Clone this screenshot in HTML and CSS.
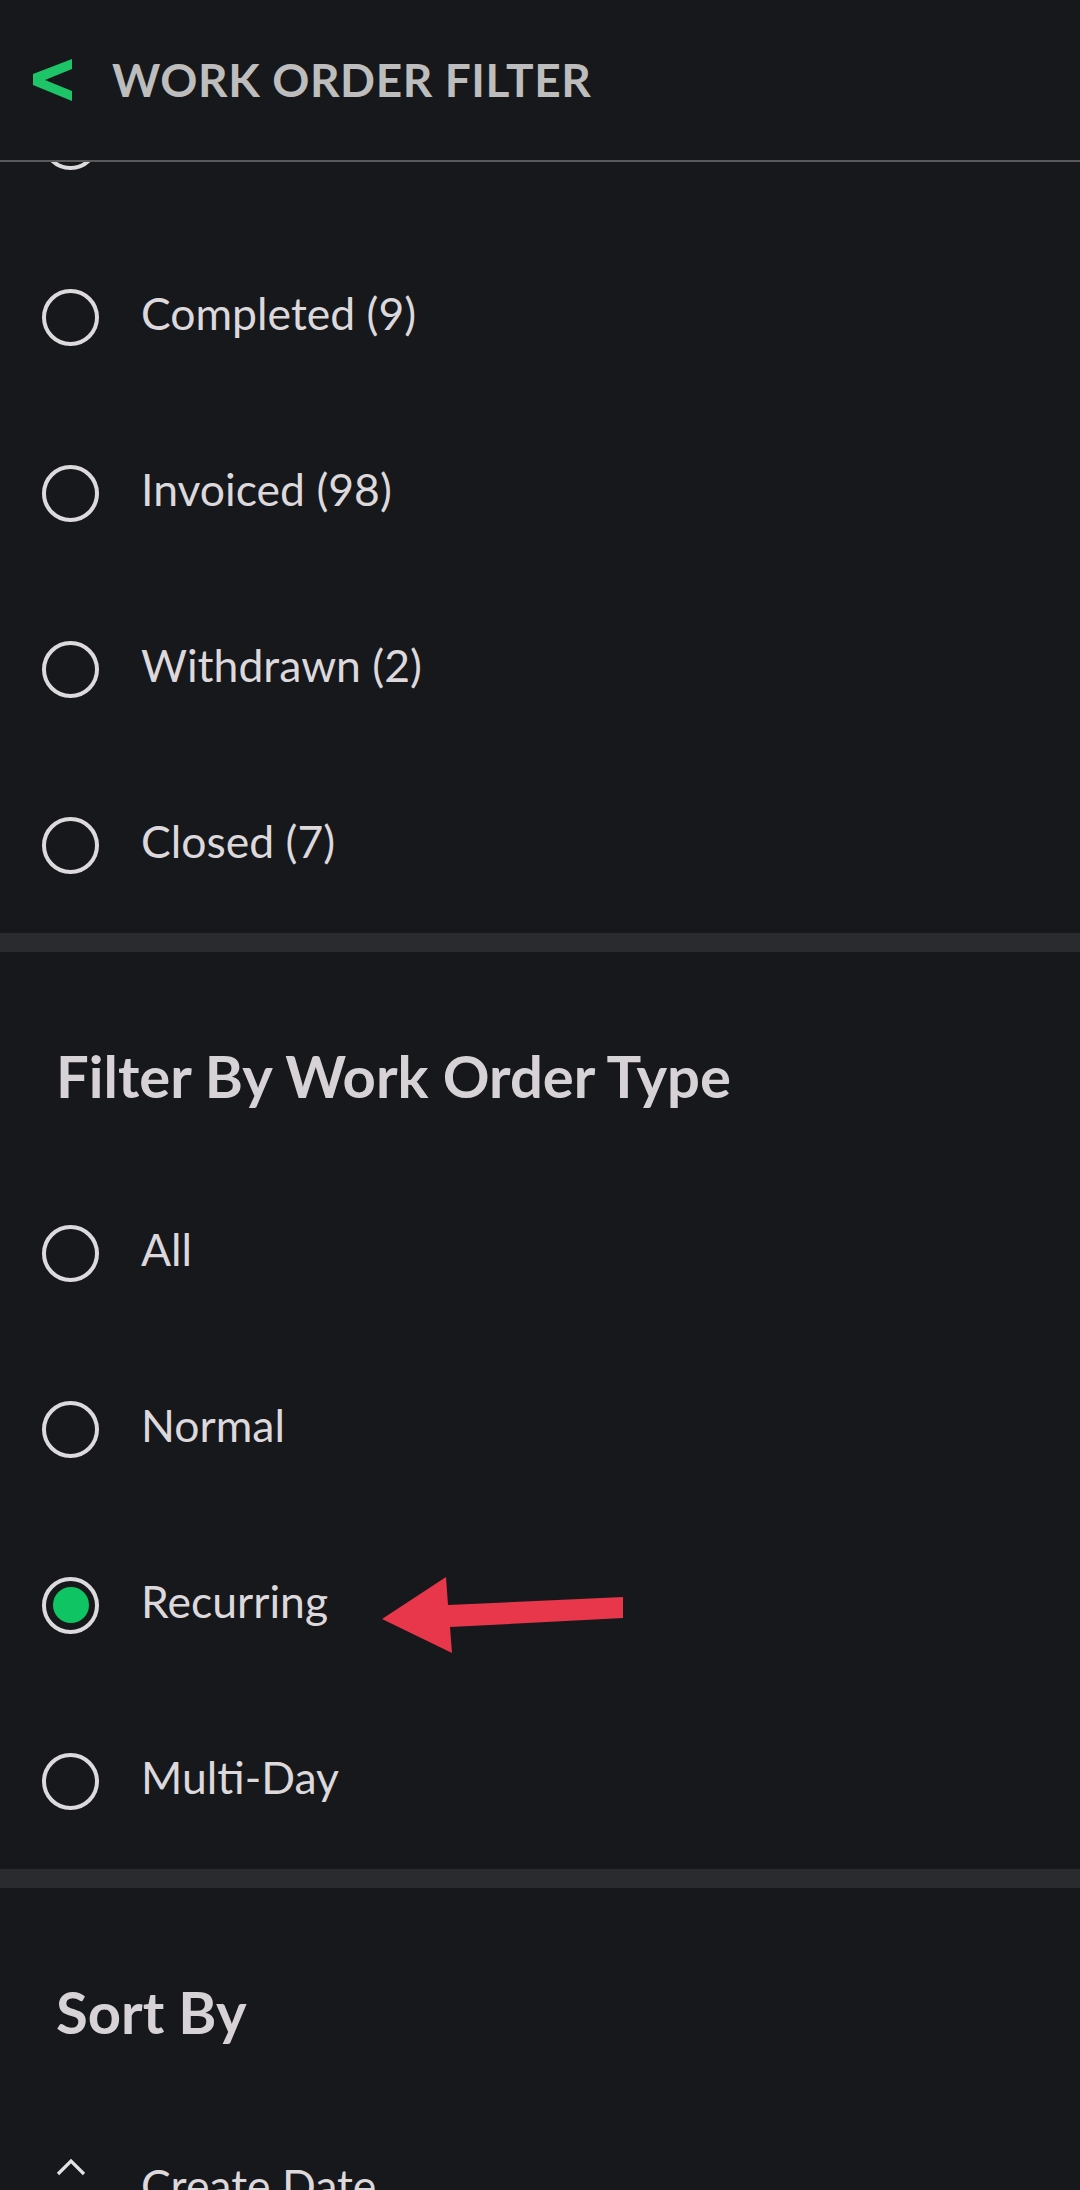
FILE: index.html
```html
<!DOCTYPE html>
<html lang="en">
<head>
<meta charset="utf-8">
<title>Work Order Filter</title>
<link rel="stylesheet" href="styles.css">
</head>
<body>
<div class="screen">
  <header class="topbar">
    <svg class="back" width="39" height="42" viewBox="33 58 39 42" aria-hidden="true">
      <polygon points="72,58 72,68 45,79 72,90 72,100 33,84 33,73" fill="#1ec468"/>
    </svg>
    <h1 class="title">WORK ORDER FILTER</h1>
  </header>

  <div class="viewport">
    <div class="scroller">
      <section class="group">
        <div class="row"><span class="radio"></span><span class="label"></span></div>
        <div class="row"><span class="radio"></span><span class="label">Completed (9)</span></div>
        <div class="row"><span class="radio"></span><span class="label">Invoiced (98)</span></div>
        <div class="row"><span class="radio"></span><span class="label">Withdrawn (2)</span></div>
        <div class="row"><span class="radio"></span><span class="label">Closed (7)</span></div>
      </section>

      <div class="divider"></div>

      <section class="group">
        <h2 class="heading">Filter By Work Order Type</h2>
        <div class="row"><span class="radio"></span><span class="label">All</span></div>
        <div class="row"><span class="radio"></span><span class="label">Normal</span></div>
        <div class="row"><span class="radio checked"><span class="dot"></span></span><span class="label">Recurring</span></div>
        <div class="row"><span class="radio"></span><span class="label">Multi-Day</span></div>
      </section>

      <div class="divider"></div>

      <section class="group">
        <h2 class="heading">Sort By</h2>
        <div class="row">
          <span class="caret">
            <svg width="30" height="18" viewBox="0 0 30 18" aria-hidden="true">
              <polyline points="2,16 15,3 28,16" fill="none" stroke="#e2e2e2" stroke-width="3.2"/>
            </svg>
          </span>
          <span class="label">Create Date</span>
        </div>
      </section>
    </div>
  </div>

  <svg class="annotation" width="260" height="90" viewBox="370 1570 260 90" aria-hidden="true">
    <polygon points="382,1619 446,1577 448,1605 623,1597 623,1618 450,1627 452,1653" fill="#e8374a"/>
  </svg>
</div>
</body>
</html>
```

FILE: styles.css
```css
html, body {
  margin: 0;
  padding: 0;
  background: #17181b;
}

.screen {
  position: relative;
  width: 1080px;
  height: 2190px;
  overflow: hidden;
  background: #17181b;
  font-family: Lato, "Noto Sans", sans-serif;
}

.topbar {
  height: 160px;
  border-bottom: 2px solid #5a5a5c;
  display: flex;
  align-items: center;
  padding-left: 33px;
  box-sizing: content-box;
}

.back {
  display: block;
  flex: none;
}

.title {
  margin: 0 0 0 40px;
  font-size: 46px;
  font-weight: 700;
  letter-spacing: 0.6px;
  color: #bdbdbd;
  line-height: 1.2;
}

.viewport {
  height: 2028px;
  overflow: hidden;
}

.scroller {
  margin-top: -109px;
}

.row {
  height: 176px;
  display: flex;
  align-items: center;
  padding-left: 42px;
}

.radio {
  flex: none;
  width: 57px;
  height: 57px;
  box-sizing: border-box;
  border: 4px solid #dcdadc;
  border-radius: 50%;
  display: flex;
  align-items: center;
  justify-content: center;
}

.dot {
  width: 36px;
  height: 36px;
  border-radius: 50%;
  background: #0fc463;
}

.label {
  margin-left: 42px;
  padding-bottom: 8px;
  font-size: 44.5px;
  line-height: 1.2;
  color: #dcd8dc;
}

.divider {
  height: 19px;
  background: #2a2b2e;
}

.heading {
  margin: 0;
  height: 213px;
  box-sizing: border-box;
  padding: 89px 0 0 56px;
  font-size: 58px;
  font-weight: 700;
  line-height: 70px;
  color: #d6d2d6;
}

.caret {
  flex: none;
  width: 57px;
  display: flex;
  justify-content: center;
  margin-bottom: 44px;
}

.caret svg {
  display: block;
}

.annotation {
  position: absolute;
  left: 370px;
  top: 1570px;
}
```
